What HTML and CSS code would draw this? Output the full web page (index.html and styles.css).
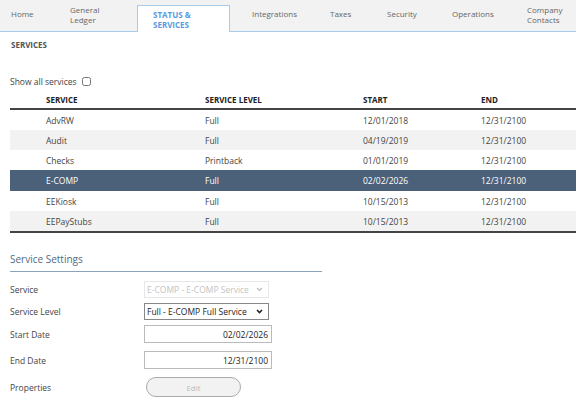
FILE: index.html
```html
<!DOCTYPE html>
<html lang="en">
  <head>
    <meta charset="UTF-8" />
    <meta name="viewport" content="width=device-width, initial-scale=1.0" />
    <title>Status &amp; Services</title>
    <link rel="stylesheet" href="styles.css">
  </head>
  <body>
    <div class="tabs">
      <div class="tab tab-home">Home</div>
      <div class="tab tab-gl">General<br>Ledger</div>
      <div class="tab tab-active">STATUS &amp;<br>SERVICES</div>
      <div class="tab tab-int">Integrations</div>
      <div class="tab tab-tax">Taxes</div>
      <div class="tab tab-sec">Security</div>
      <div class="tab tab-ops">Operations</div>
      <div class="tab tab-con">Company<br>Contacts</div>
    </div>

    <div class="page">
      <div class="section-title">SERVICES</div>

      <label class="show-all">Show all services <input type="checkbox" /></label>

      <table class="services">
        <thead>
          <tr>
            <th class="c1">SERVICE</th>
            <th class="c2">SERVICE LEVEL</th>
            <th class="c3">START</th>
            <th class="c4">END</th>
          </tr>
        </thead>
        <tbody>
          <tr><td class="c1">AdvRW</td><td>Full</td><td>12/01/2018</td><td>12/31/2100</td></tr>
          <tr><td class="c1">Audit</td><td>Full</td><td>04/19/2019</td><td>12/31/2100</td></tr>
          <tr><td class="c1">Checks</td><td>Printback</td><td>01/01/2019</td><td>12/31/2100</td></tr>
          <tr class="selected"><td class="c1">E-COMP</td><td>Full</td><td>02/02/2026</td><td>12/31/2100</td></tr>
          <tr><td class="c1">EEKiosk</td><td>Full</td><td>10/15/2013</td><td>12/31/2100</td></tr>
          <tr><td class="c1">EEPayStubs</td><td>Full</td><td>10/15/2013</td><td>12/31/2100</td></tr>
        </tbody>
      </table>

      <h2 class="settings-title">Service Settings</h2>

      <div class="form">
        <div class="form-row">
          <span class="form-label">Service</span>
          <span class="select-wrap disabled">
            <select class="field-select" disabled>
              <option>E-COMP - E-COMP Service</option>
            </select>
            <svg class="chevron" width="7" height="5" viewBox="0 0 7 5"><path d="M1 1 L3.5 3.5 L6 1" fill="none" stroke="#bbb" stroke-width="1.2"/></svg>
          </span>
        </div>
        <div class="form-row">
          <span class="form-label">Service Level</span>
          <span class="select-wrap">
            <select class="field-select">
              <option>Full - E-COMP Full Service</option>
            </select>
            <svg class="chevron" width="7" height="5" viewBox="0 0 7 5"><path d="M1 1 L3.5 3.5 L6 1" fill="none" stroke="#222" stroke-width="1.6"/></svg>
          </span>
        </div>
        <div class="form-row row-date">
          <span class="form-label">Start Date</span>
          <input class="field-input" type="text" value="02/02/2026" />
        </div>
        <div class="form-row row-date">
          <span class="form-label">End Date</span>
          <input class="field-input" type="text" value="12/31/2100" />
        </div>
        <div class="form-row row-props">
          <span class="form-label">Properties</span>
          <button class="edit-button" disabled>Edit</button>
        </div>
      </div>
    </div>
  </body>
</html>
```

FILE: styles.css
```css
body {
  font-family: "Open Sans", Arial, sans-serif;
  font-size: 8.5px;
  color: #333;
  margin: 0;
  background-color: #fff;
  overflow: hidden;
}

.tabs {
  display: grid;
  grid-template-columns: 59px 78px 93px 89px 57px 65px 75px 60px;
  height: 31px;
  background-color: #f2f2f2;
  border-bottom: 1px solid #a6cbeb;
}

.tab {
  color: #666;
  font-size: 8px;
  line-height: 10px;
  padding: 9px 0 0 11px;
}

.tab-gl,
.tab-con {
  padding-top: 5px;
}

.tab-active {
  margin-top: 5px;
  margin-bottom: -1px;
  padding: 4px 0 0 15px;
  background-color: #fff;
  border: 1px solid #a6cbeb;
  border-bottom: none;
  color: #5b9be0;
  font-weight: bold;
}

.tab-int {
  padding-left: 22px;
}

.page {
  padding: 0 0 0 10px;
}

.section-title {
  font-size: 8px;
  font-weight: bold;
  color: #555;
  margin: 8px 0 0 1px;
  line-height: 10px;
}

.show-all {
  display: flex;
  align-items: center;
  gap: 2px;
  margin-top: 25px;
  height: 12px;
  color: #444;
}

.show-all input {
  width: 9px;
  height: 9px;
  margin: 0 0 0 3px;
}

table.services {
  width: 566px;
  border-collapse: collapse;
  margin-top: 4px;
}

.services th,
.services td {
  text-align: left;
  padding: 0;
  height: 20px;
  color: #444;
}

.services th {
  height: 17px;
  font-size: 8px;
  color: #222;
  font-weight: bold;
  border-bottom: 2px solid #444;
}

.services tbody tr:last-child td {
  border-bottom: 2px solid #444;
}

.services .c1 {
  width: 159px;
  padding-left: 36px;
}

.services .c2 {
  width: 158px;
}

.services .c3 {
  width: 118px;
}

.services tbody tr:nth-child(even) {
  background-color: #f2f2f2;
}

.services tbody tr.selected {
  background-color: #4b6179;
}

.services tr.selected td {
  color: #fff;
  height: 21px;
}

.settings-title {
  width: 312px;
  margin: 19px 0 0 0;
  padding-bottom: 5px;
  font-size: 10px;
  font-weight: normal;
  line-height: 14px;
  color: #4f6a86;
  border-bottom: 1px solid #8ba3bb;
}

.form {
  display: flex;
  flex-direction: column;
  margin-top: 9px;
}

.form-row {
  display: flex;
  align-items: center;
  flex: none;
  height: 17px;
  margin-bottom: 5px;
}

.row-date {
  height: 18px;
  margin-bottom: 7px;
}

.row-date + .row-date {
  margin-top: 1px;
}

.row-props {
  height: 20px;
  margin-top: 1px;
}

.form-label {
  width: 134px;
  color: #444;
}

.select-wrap {
  position: relative;
  display: inline-block;
  height: 17px;
}

.chevron {
  position: absolute;
  right: 6px;
  top: 6px;
  pointer-events: none;
}

.field-select {
  appearance: none;
  -webkit-appearance: none;
  width: 125px;
  height: 17px;
  font-family: "Open Sans", Arial, sans-serif;
  font-size: 8.5px;
  color: #222;
  border: 1px solid #888;
  border-radius: 0;
  background-color: #fff;
  padding: 0 0 0 2px;
  margin: 0;
}

.field-select:disabled {
  color: #aaa;
  border-color: #ddd;
}

.field-input {
  width: 128px;
  height: 18px;
  box-sizing: border-box;
  font-family: "Open Sans", Arial, sans-serif;
  font-size: 8.5px;
  color: #222;
  text-align: right;
  border: 1px solid #bbb;
  padding: 0 3px;
  margin: 0;
}

.edit-button {
  width: 95px;
  height: 20px;
  margin-left: 2px;
  border: 1px solid #aaa;
  border-radius: 10px;
  background-color: #f2f2f2;
  color: #bbb;
  font-family: "Open Sans", Arial, sans-serif;
  font-size: 8px;
}
```
